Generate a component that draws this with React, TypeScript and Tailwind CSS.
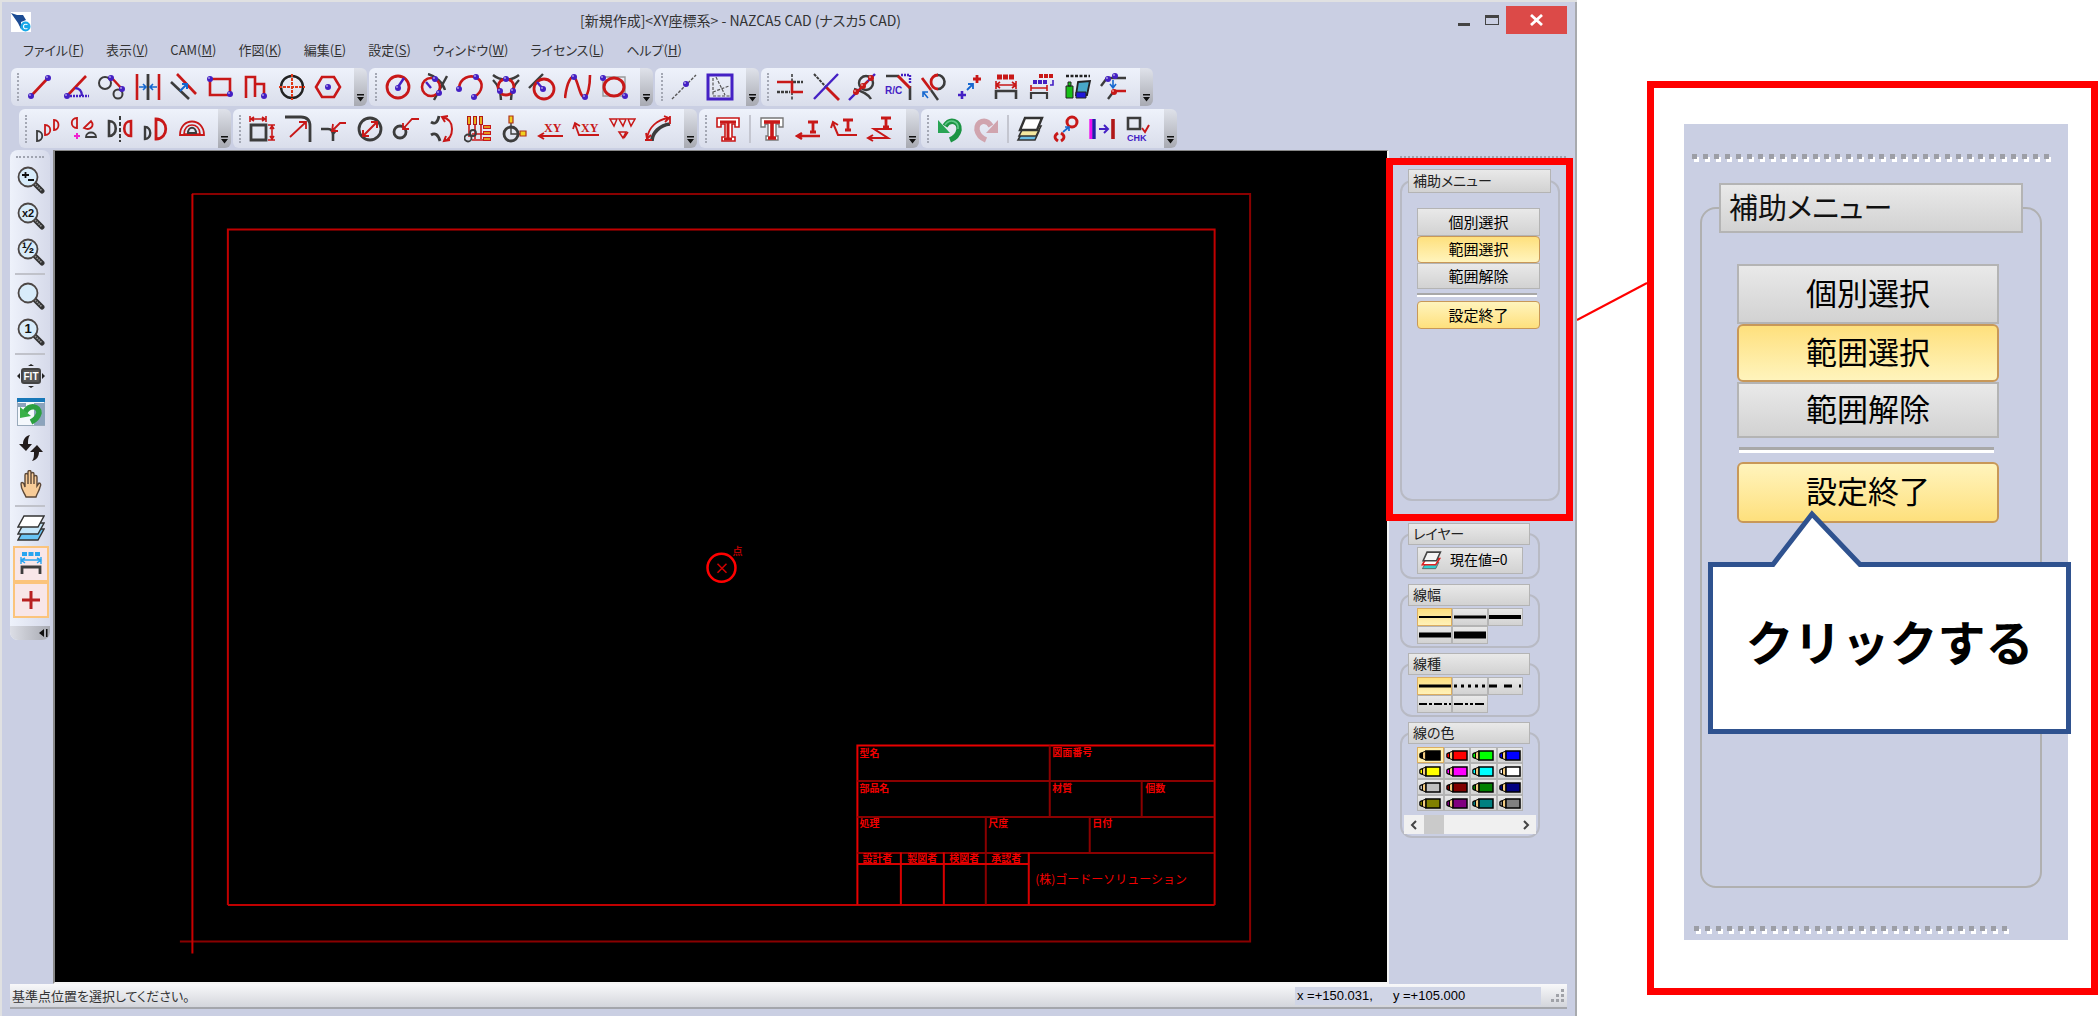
import { ReactNode } from "react";
import clsx from "clsx";

const RED = "#c81818";
const INK = "#3c3c3c";
const VIOLET = "#4420c4";
const BLUE = "#1668d0";

function Ball({ x, y, fill = VIOLET }: { x: number; y: number; fill?: string }) {
  return (
    <>
      <circle cx={x} cy={y} r="3" fill={fill} />
      <circle cx={x - 1} cy={y - 1} r="0.9" fill="#fff" opacity="0.6" />
    </>
  );
}

function Icon({ children }: { children: ReactNode }) {
  return (
    <svg width="28" height="28" viewBox="0 0 28 28" fill="none" stroke={RED} strokeWidth="2.4" aria-hidden="true">
      {children}
    </svg>
  );
}

type Tool = { name: string; icon: ReactNode; active?: boolean } | "separator";

const drawTools: Tool[] = [
  { name: "線分", icon: <><path d="M5 23 22 5" strokeWidth="2.6" /><g stroke="none"><Ball x={5} y={23} /><Ball x={22} y={5} /></g></> },
  {
    name: "角度線",
    icon: <><path d="M5 23 24 3" strokeWidth="2.6" /><path d="M5 23h22" stroke={VIOLET} strokeDasharray="2 1" /><path d="M13 15c4 0 7 3 7 8" stroke={VIOLET} /><g stroke="none"><Ball x={5} y={23} /></g></>,
  },
  {
    name: "接線",
    icon: <><circle cx="7" cy="10" r="6" stroke={INK} strokeWidth="2" /><circle cx="20" cy="21" r="4.5" stroke={INK} strokeWidth="2" /><path d="m13 4 11 12" /><g stroke="none"><Ball x={13} y={5} /><Ball x={24} y={16} /></g></>,
  },
  {
    name: "平行線",
    icon: <><path d="M3 1v26M25 1v26" strokeWidth="2.6" /><path d="M14 1v26" stroke={INK} strokeWidth="2.8" /><path d="M5 14h6m-2-3 3 3-3 3M23 14h-6m2-3-3 3 3 3" stroke={BLUE} strokeWidth="1.6" /></>,
  },
  {
    name: "オフセット",
    icon: <><path d="m1 9 18 17" stroke={INK} strokeWidth="2.6" /><path d="m7 1 19 20" strokeWidth="2.6" /><path d="m10 18 7-7m-5 0h5v5" stroke={BLUE} strokeWidth="2" /></>,
  },
  { name: "矩形", icon: <><path d="M4 6h20v16H4z" strokeWidth="2.6" /><g stroke="none"><Ball x={4} y={6} /><Ball x={24} y={21} /></g></> },
  { name: "連続線", icon: <><path d="M4 25V4h9v20M13 11h9v12" strokeWidth="2.6" /><g stroke="none"><Ball x={22} y={23} /></g></> },
  {
    name: "中心線",
    icon: <><circle cx="14" cy="14" r="11" stroke="#222" strokeWidth="2.4" /><path d="M14 1v26M1 14h26" strokeDasharray="3 1" stroke="#e03818" strokeWidth="2" /></>,
  },
  { name: "多角形", icon: <><path d="M8 4h12l6 10-6 10H8L2 14z" strokeWidth="2.6" /><g stroke="none"><Ball x={14} y={14} /></g></> },
];

const circleTools: Tool[] = [
  { name: "円", icon: <><circle cx="14" cy="14" r="11" strokeWidth="2.8" /><path d="m14 14 6-9" stroke={VIOLET} /><g stroke="none"><Ball x={14} y={15} /></g></> },
  {
    name: "接円",
    icon: <><path d="M8 1c8 2 15 9 17 16M27 3 14 27" stroke={INK} /><circle cx="11" cy="14" r="9" strokeWidth="2.6" /><path d="m6 9 5 6" stroke={VIOLET} /><g stroke="none"><Ball x={15} y={6} /><Ball x={19} y={20} /></g></>,
  },
  { name: "円弧", icon: <><path d="M3 15C4 5 14 1 21 5s6 14-3 19" strokeWidth="2.6" /><g stroke="none"><Ball x={3} y={16} /><Ball x={20} y={4} /><Ball x={18} y={24} /></g></> },
  {
    name: "三接円",
    icon: <><path d="M1 2c7 6 19 6 26 0M1 7c5 5 8 11 8 20M27 7c-5 5-8 11-8 20" stroke={INK} /><circle cx="14" cy="14" r="8" strokeWidth="2.8" /><g stroke="none"><Ball x={14} y={6} /><Ball x={8} y={18} /><Ball x={21} y={18} /></g></>,
  },
  {
    name: "接線円",
    icon: <><path d="M1 15 15 1" stroke={INK} /><circle cx="16" cy="16" r="10" strokeWidth="2.8" /><path d="m9 9 6 7" stroke={VIOLET} /><g stroke="none"><Ball x={15} y={16} /></g></>,
  },
  { name: "スプライン", icon: <><path d="M1 25C3 8 8 1 11 5s5 19 9 19 6-12 6-22" strokeWidth="2.6" /><g stroke="none"><Ball x={10} y={4} /><Ball x={21} y={24} /></g></> },
  { name: "楕円", icon: <><path d="M3 4h22v19H3z" stroke="#999" strokeWidth="1.4" /><ellipse cx="14" cy="14" rx="10" ry="9" strokeWidth="3" /><g stroke="none"><Ball x={3} y={5} /><Ball x={25} y={23} /></g></> },
];

const pointTools: Tool[] = [
  { name: "点", icon: <><path d="M2 26 26 2" stroke="#555" strokeWidth="1.4" strokeDasharray="3 1.5" /><g stroke="none"><Ball x={16} y={11} /></g></> },
  {
    name: "枠",
    icon: <><path d="M2 2h24v24H2z" stroke={VIOLET} strokeWidth="3" /><path d="M7 5v18h17M10 4l9 18M7 19l16-6" stroke="#555" strokeWidth="1.2" strokeDasharray="3 1.5" /></>,
  },
];

const editTools: Tool[] = [
  {
    name: "トリム",
    icon: <><path d="M16 1v26" stroke={INK} strokeWidth="1.6" strokeDasharray="3 1.5" /><path d="M17 9h10M1 19h13" stroke={INK} strokeWidth="2.6" strokeDasharray="3 1" /><path d="M1 9h15v10h11" strokeWidth="2.6" /></>,
  },
  {
    name: "交点分割",
    icon: <><path d="m2 1 12 13" stroke={INK} strokeDasharray="3 1" strokeWidth="2" /><path d="m14 14 13 13" strokeWidth="2.8" /><path d="M2 26 26 1" stroke={VIOLET} /></>,
  },
  {
    name: "要素分割",
    icon: <><circle cx="18" cy="10" r="7" stroke={INK} /><path d="M6 16c8 2 14 5 17 10" stroke={INK} /><path d="M1 27 27 1" stroke={VIOLET} /><path d="m8 20 12-12" /><g stroke="none"><Ball x={23} y={5} fill={RED} /><Ball x={8} y={19} fill={RED} /><Ball x={15} y={13} fill={RED} /></g></>,
  },
  {
    name: "面取り",
    icon: <><path d="M2 3h13M26 13v14" stroke={INK} strokeWidth="2.6" /><path d="M17 2h9v9" stroke={VIOLET} strokeDasharray="2 1" /><path d="m14 3 12 12" strokeWidth="3" /><text x="1" y="21" fontSize="10" fontWeight="700" fontFamily="Liberation Sans" fill={VIOLET} stroke="none">R/C</text></>,
  },
  {
    name: "延長",
    icon: <><path d="M17 2a7 7 0 0 1 1 14" stroke={INK} strokeWidth="2.6" /><path d="M18 2a7 7 0 0 0 0 14" strokeWidth="2.8" /><path d="m2 5 9 12" strokeWidth="2.8" /><path d="m11 17 7 10" stroke={INK} /><path d="m8 25-5-6m0 5v-5h5" stroke={BLUE} strokeWidth="1.6" /></>,
  },
  { name: "移動", icon: <><path d="M2 22h8M6 18v8" stroke={VIOLET} strokeWidth="2.6" /><path d="M17 6h8M21 2v8" strokeWidth="2.8" /><path d="m11 17 6-6m-5 0h5v5" stroke={BLUE} strokeWidth="1.8" /></> },
  {
    name: "寸法移動",
    icon: <><path d="M5 4h18" strokeWidth="5" strokeDasharray="5 1" /><path d="M4 8v8M24 8v8M4 12h20M8 9l-4 3 4 3M20 9l4 3-4 3" strokeWidth="1.6" /><path d="M4 26v-8h20v8" stroke={INK} strokeWidth="2.6" /></>,
  },
  {
    name: "寸法編集",
    icon: <><path d="M11 3h15" strokeWidth="4" strokeDasharray="4 1" /><path d="M5 9h15" stroke={VIOLET} strokeWidth="4" strokeDasharray="4 1" /><path d="M3 12v6M19 12v6M3 15h16" strokeWidth="1.6" /><path d="M3 26v-6h16v6" stroke={INK} strokeWidth="2.2" /><path d="M25 7v5h-3" stroke={VIOLET} strokeWidth="1.6" /></>,
  },
  {
    name: "属性変更",
    icon: <><path d="M2 3h24" stroke="#222" strokeDasharray="3 1.5" /><path d="M2 13h7v12H2zM4 9h3v4H4z" fill="#18c018" stroke="#222" strokeWidth="1" /><path d="m14 9 12-1-3 14H12z" fill="#48a8c8" stroke="#222" strokeWidth="1.8" /><path d="M12 19h10v6H12z" fill="#2018d8" stroke="#222" strokeWidth="1" /></>,
  },
  {
    name: "端点移動",
    icon: <><path d="m1 13 6-8h19" stroke={INK} /><path d="m8 26 6-8" stroke={INK} /><path d="M14 18h12" strokeWidth="2.6" /><path d="M13 7v7m-3-3 3 4 3-4" stroke={BLUE} strokeWidth="1.6" /><g stroke="none"><Ball x={8} y={6} /><Ball x={15} y={3} /><Ball x={14} y={19} fill={RED} /></g></>,
  },
];

const copyTools: Tool[] = [
  { name: "平行複写", icon: <><path d="M3 16v10c7 0 7-10 0-10z" stroke={INK} strokeWidth="1.8" /><path d="M11 10v10c7 0 7-10 0-10zM20 5v10c6 0 6-10 0-10z" strokeWidth="1.8" /></> },
  { name: "回転複写", icon: <><path d="M7 3v10C0 13 0 3 7 3zM14 13l7-7c4 5-1 10-7 7z" strokeWidth="1.8" /><path d="M16 22h10c0-6-10-6-10 0z" stroke={INK} strokeWidth="1.8" /><path d="M4 21h6M7 18v6" stroke="#f020d0" strokeWidth="2" /></> },
  { name: "対称複写", icon: <><path d="M3 6v15c9 0 9-15 0-15z" stroke={INK} strokeWidth="2.6" /><path d="M14 1v26" stroke={INK} strokeDasharray="4 2" strokeWidth="2" /><path d="M25 6v15c-9 0-9-15 0-15z" strokeWidth="2.6" /></> },
  { name: "拡大複写", icon: <><path d="M3 12v12c7 0 7-12 0-12z" stroke={INK} /><path d="M14 4v20c13 0 13-20 0-20z" strokeWidth="2.8" /></> },
  { name: "オフセット複写", icon: <><path d="M2 20C2 2 26 2 26 20z" strokeWidth="1.8" /><path d="M6 19c0-12 16-12 16 0z" strokeWidth="1.6" /><path d="M10 18c0-7 8-7 8 0z" stroke={INK} strokeWidth="2" /></> },
];

const dimensionTools: Tool[] = [
  { name: "長さ寸法", icon: <><path d="M3 10h15v15H3z" stroke={INK} strokeWidth="2.8" /><path d="M2 1v6M18 1v6M3 4h14M6 2 3 4l3 2M14 2l3 2-3 2M20 10h7M20 25h7M24 11v13M22 14l2-3 2 3M22 21l2 3 2-3" strokeWidth="1.6" /></> },
  { name: "半径寸法", icon: <><path d="M1 2h16q9 0 9 9v16" stroke={INK} strokeWidth="2.8" /><path d="M6 22 22 7m-7 0h7v7" strokeWidth="1.8" /></> },
  { name: "面取り寸法", icon: <><path d="M1 14h7q5 0 5 6v6M13 19l3-4" stroke={INK} strokeWidth="2.6" /><path d="M26 8h-6l-8 8m1-7-1 7h6" strokeWidth="1.8" /></> },
  { name: "直径寸法", icon: <><circle cx="14" cy="14" r="11" stroke={INK} strokeWidth="2.8" /><path d="M7 21 21 7m-6 0h6v6M7 15v6h6" strokeWidth="2" /></> },
  { name: "穴寸法", icon: <><circle cx="8" cy="17" r="6" stroke={INK} strokeWidth="2.8" /><path d="M27 4h-7l-9 10m0-6v6h6" strokeWidth="1.8" /></> },
  { name: "角度寸法", icon: <><path d="M3 7q6 4 8-6M3 20q6-4 9 6" stroke={INK} strokeWidth="2.8" /><path d="M14 2q10 2 10 12t-8 12M20 1l-6 1 3 5M22 25l-6 1 2-5" strokeWidth="2" /></> },
  {
    name: "座標寸法",
    icon: <><path d="M5 1v9M11 1v9M17 1v9" stroke="#b01818" strokeWidth="4" /><path d="M5 2v7M11 2v7M17 2v7" stroke="#f0c020" strokeWidth="1.8" /><path d="M5 10v12M11 10v14M17 10v14M8 19h12M8 25h12" strokeWidth="1.6" /><path d="M19 12h8M19 18h8M19 24h8" strokeWidth="4" /><path d="M20 12h6M20 18h6M20 24h6" stroke="#f0c020" strokeWidth="1.6" /><circle cx="4" cy="23" r="3.5" stroke={INK} strokeWidth="1.8" /><circle cx="9" cy="18" r="3" stroke={INK} strokeWidth="1.8" /></>,
  },
  {
    name: "穴座標",
    icon: <><circle cx="11" cy="19" r="7" stroke={INK} strokeWidth="2.8" /><path d="M11 8v11h10" stroke={INK} strokeWidth="1.4" /><path d="M9 1h4v7H9zM20 16h6v5h-6z" fill="#f0d020" stroke="#b03018" strokeWidth="1.2" /></>,
  },
  { name: "XY座標", icon: <><path d="M27 21H3m5-3-5 3 5 3" strokeWidth="2" /><text x="8" y="17" fontSize="12" fontWeight="700" fontFamily="Liberation Serif" fill={RED} stroke="none">XY</text></> },
  { name: "XY引出", icon: <><path d="M27 20H7L3 9m-2 5 2-6 5 3" strokeWidth="1.8" /><text x="9" y="17" fontSize="12" fontWeight="700" fontFamily="Liberation Serif" fill={RED} stroke="none">XY</text></> },
  { name: "仕上記号", icon: <path d="M2 4h7L6 11zM11 4h7l-3 7zM20 4h7l-4 7zM11 17h7l-3 6zM16 23l4-6" strokeWidth="1.5" /> },
  { name: "円弧寸法", icon: <><path d="M8 26c0-8 8-16 18-17" stroke={INK} strokeWidth="3.6" /><path d="M3 23C5 12 13 5 24 3M20 1l5 2-4 4M2 18l1 6 4-4M26 1v8M1 25h7" strokeWidth="1.8" /></> },
];

const textTools: Tool[] = [
  { name: "文字枠", icon: <><path d="M3 3h22v9h-4V9h-3v13h3v4H8v-4h3V9H7v3H3z" fill="#fff" strokeWidth="1.6" /><path d="M6 7h16M14 8v16M10 24h8" strokeWidth="3" /></> },
  "separator",
  { name: "文字", icon: <><path d="M3 3h22v9h-4V9h-3v12h2v4H8v-4h2V9H7v3H3z" fill="#fff" stroke="#777" strokeWidth="1.4" /><path d="M6 7h16M14 7v17M10 23h8" strokeWidth="3.6" /></> },
  { name: "引出文字", icon: <><path d="M26 21H3m5-3-5 3 5 3" /><path d="M14 7h10M19 7v10M16 17h6" strokeWidth="2.8" /></> },
  { name: "引出線", icon: <><path d="M27 20H8L3 8m-2 5 2-6 5 3" strokeWidth="2" /><path d="M13 5h10M18 5v10M15 15h6" strokeWidth="2.8" /></> },
  { name: "矢印文字", icon: <><path d="M15 3h10M20 3v9M17 12h6" strokeWidth="2.8" /><path d="M26 14H8l14 9H2m5-3-5 3 5 3" strokeWidth="2" /></> },
];

const undoTools: Tool[] = [
  {
    name: "元に戻す",
    icon: <><path d="M9 11c5-8 15-5 14 4-1 5-4 8-9 10" stroke="#1c9444" strokeWidth="5.5" /><path d="M9 10c5-7 14-4 13 4" stroke="#60c888" strokeWidth="1.6" /><path d="M2 5v13h12z" fill="#28a454" stroke="none" /></>,
  },
  {
    name: "やり直し",
    icon: <><path d="M19 11C14 3 4 6 5 15c1 5 4 8 9 10" stroke="#d0a4ae" strokeWidth="5.5" /><path d="M26 5v13H14z" fill="#d0a4ae" stroke="none" /></>,
  },
  "separator",
  {
    name: "レイヤー",
    icon: <><path d="M7 16h16l-4 9H2z" fill="#68bce4" stroke="#333" strokeWidth="1.6" /><path d="M8 11h17l-5 10H3z" fill="#f4e8a0" stroke="#333" strokeWidth="1.6" /><path d="M9 3h17l-5 12H4z" fill="#fff" stroke="#333" strokeWidth="2.4" /></>,
  },
  { name: "要素変換", icon: <><circle cx="20" cy="7" r="5" strokeWidth="3" /><path d="M6 18q-6 4 0 8M9 18q6 4 0 8" strokeWidth="2.8" /><path d="m11 17 6-5m-4 0h4v4" stroke={BLUE} strokeWidth="1.7" /></> },
  { name: "間隔", icon: <><path d="M3 4v20" stroke="#f010f0" strokeWidth="3.4" /><path d="M6 4v20" stroke="#2020a8" strokeWidth="3.4" /><path d="M25 4v20" strokeWidth="3.6" stroke="#b01818" /><path d="M11 14h8m-3-4 4 4-4 4" stroke={VIOLET} strokeWidth="2" /></> },
  {
    name: "チェック",
    icon: <><path d="M4 3h12v11H4z" stroke={INK} strokeWidth="2.6" /><path d="m18 13 3 4 4-7" strokeWidth="2" /><text x="3" y="26" fontSize="9" fontWeight="700" fontFamily="Liberation Sans" fill={VIOLET} stroke="none">CHK</text></>,
  },
];

const Lens = ({ label, labelSize = 11 }: { label?: string; labelSize?: number }) => (
  <>
    <path d="m17 17 8 8" stroke="#333" strokeWidth="5" strokeLinecap="round" />
    <path d="m18 18 7 7" stroke="#999" strokeWidth="1.6" strokeDasharray="1.5 1" />
    <circle cx="11" cy="11" r="9.5" fill="#d8ecfa" stroke="#4c4644" strokeWidth="1.8" />
    {label && (
      <text x="11" y="15" textAnchor="middle" fontSize={labelSize} fontWeight="700" fontFamily="Liberation Sans" fill="#111" stroke="none">
        {label}
      </text>
    )}
  </>
);

const viewTools: Tool[] = [
  { name: "拡大縮小", icon: <><Lens /><path d="M5 9h7M8.5 6v6M11 14h6" stroke="#111" strokeWidth="1.8" /></> },
  { name: "2倍", icon: <Lens label="x2" /> },
  { name: "1/2倍", icon: <Lens label="½" labelSize={15} /> },
  "separator",
  { name: "窓拡大", icon: <Lens /> },
  { name: "等倍", icon: <Lens label="1" labelSize={13} /> },
  "separator",
  {
    name: "全体表示",
    icon: <><rect x="5" y="7" width="18" height="14" rx="2" fill="#555" stroke="#444" strokeWidth="2" /><text x="14" y="18" textAnchor="middle" fontSize="10" fontWeight="700" fontFamily="Liberation Sans" fill="#fff" stroke="none">FIT</text><path d="m0 14 3-3v6zM28 14l-3-3v6zM11 4l3-2 3 2zM11 24l3 2 3-2z" fill="#222" stroke="none" /></>,
  },
  {
    name: "再表示",
    icon: <><path d="M0 0h28v28H0z" fill="#f4f8fc" stroke="#9ab" strokeWidth="2" /><path d="M0 0h28v4H0z" fill="#1878b8" stroke="none" /><path d="M17 5h11v22H17zM1 5h8v4H1z" fill="#8ca4bc" stroke="none" /><path d="M8 14c5-8 14-6 14 1-1 4-4 7-8 9" stroke="#2ca040" strokeWidth="5.5" /><path d="M3 9v11l11-2z" fill="#38b048" stroke="none" /></>,
  },
  { name: "更新", icon: <path d="M13 1C8 2 6 6 6 10H2l7 7 6-7h-4c0-4 0-6 2-9zM15 27c5-1 7-5 7-9h4l-6-7-7 7h4c0 4 0 6-2 9z" fill="#221c1c" stroke="none" /> },
  {
    name: "画面移動",
    icon: <path d="M9 27c-2-5-5-7-5-13 0-2 2-2 3 0l1 3V5c0-2 3-2 3 0V2c0-2 3-2 3 0v2c0-2 3-2 3 0v3c0-2 3-2 3 0v9l2-3c2 0 2 2 1 4-1 5-3 6-4 10zM11 5v9M14 4v10M17 6v8" fill="#f8cc98" stroke="#5c4838" strokeWidth="1.4" />,
  },
  "separator",
  {
    name: "レイヤー一覧",
    icon: <><path d="M7 15h20l-6 11H1z" fill="#68c4f4" stroke="#333" strokeWidth="1.4" /><path d="M7 9h20l-6 11H1z" fill="#c4e6fa" stroke="#333" strokeWidth="1.4" /><path d="M7 2h20l-6 11H1z" fill="#fff" stroke="#333" strokeWidth="1.4" /></>,
  },
  {
    name: "寸法表示",
    active: true,
    icon: <><path d="M5 4h18" stroke="#28a4f0" strokeWidth="4" strokeDasharray="5 1.5" /><path d="M4 7v7M24 7v7M4 10h20M8 8l-4 2 4 3M20 8l4 2-4 3" stroke="#28a4f0" strokeWidth="1.4" /><path d="M5 24v-7h18v7" stroke={INK} strokeWidth="2.8" /></>,
  },
  { name: "原点表示", active: true, icon: <path d="M5 14h18M14 5v18" stroke="#b82020" strokeWidth="3" /> },
];

const menus = [
  ["ファイル", "F"],
  ["表示", "V"],
  ["CAM", "M"],
  ["作図", "K"],
  ["編集", "E"],
  ["設定", "S"],
  ["ウィンドウ", "W"],
  ["ライセンス", "L"],
  ["ヘルプ", "H"],
];

const pens = [
  "#000000", "#ff0000", "#00ff00", "#0000ff",
  "#ffff00", "#ff00ff", "#00ffff", "#ffffff",
  "#c0c0c0", "#800000", "#008000", "#000080",
  "#808000", "#800080", "#008080", "#808080",
];

const greyFace = "border-[#b4b4b4] bg-linear-to-b from-[#e9e9e9] to-[#d2d2d2]";

function Toolbar({ label, tools }: { label: string; tools: Tool[] }) {
  return (
    <div role="toolbar" aria-label={label} className="flex overflow-hidden rounded-md">
      <div className="flex items-center bg-linear-to-b from-[#eef2fb] to-[#dadeeb] pr-2">
        <div className="ml-[6px] mr-[3px] h-7 border-l-2 border-dotted border-[#a4a8b4]" />
        {tools.map((tool, i) =>
          tool === "separator" ? (
            <div key={i} className="mx-[3px] h-7 w-[2px] bg-[#c4c6d0]" />
          ) : (
            <button key={i} title={tool.name} className="flex w-9 justify-center">
              <Icon>{tool.icon}</Icon>
            </button>
          )
        )}
      </div>
      <button title="オプション" className="flex w-[13px] items-end justify-center bg-linear-to-b from-[#dfe2ea] to-[#a8aab2] pb-1">
        <svg width="9" height="9" viewBox="0 0 9 9" aria-hidden="true">
          <path d="M1 1h7v1.5H1zM1 4h7L4.500 8.5z" fill="#111" />
        </svg>
      </button>
    </div>
  );
}

function ViewBar() {
  return (
    <div role="toolbar" aria-label="表示" className="w-10 overflow-hidden rounded-lg bg-linear-to-r from-[#eef2fb] to-[#d6daea]">
      <div className="mx-auto mb-1 mt-[6px] w-7 border-t-2 border-dotted border-[#a0a4b0]" />
      {viewTools.map((tool, i) =>
        tool === "separator" ? (
          <div key={i} className="mx-auto my-[3px] h-[2px] w-[30px] bg-[#c0c2ca]" />
        ) : (
          <button
            key={i}
            title={tool.name}
            className={clsx("ml-[3px] flex h-9 w-9 items-center justify-center", tool.active && "border-2 border-[#fbc47c] bg-[#f8e6e8]")}
          >
            <Icon>{tool.icon}</Icon>
          </button>
        )
      )}
      <button title="オプション" className="mt-2 flex h-[14px] w-full items-center justify-end bg-linear-to-r from-[#dcdee6] to-[#a8aab2] pr-[2px]">
        <svg width="9" height="8" viewBox="0 0 9 8" aria-hidden="true">
          <path d="M5 0v8L0 4zM7 0h1.5v8H7z" fill="#111" />
        </svg>
      </button>
    </div>
  );
}

function Sheet() {
  return (
    <svg viewBox="0 0 1333 830" className="block w-full" fill="none" stroke="#8a0000" strokeWidth="2" role="img" aria-label="図面">
      <path d="M125 791H1196V43H137" />
      <path d="M137.500 43V803" stroke="#c80000" />
      <path d="M173 754.500V78.500H1160.500V754.500" stroke="#c00000" />
      <path d="M173 754.500H1160.500" stroke="#c00000" />
      <path d="M803 754V595H1160" stroke="#e80000" />
      <path d="M803 630.500h357M803 666.500h357M803 702.500h357M995.500 595v72M1087.500 630v36M931.500 666v88M1035.500 666v36" />
      <path d="M803 713.500h172M846.500 702v52M889.500 702v52M974.500 702v52" stroke="#d80000" />
      <circle cx="667" cy="417" r="14" stroke="#ff0000" strokeWidth="2.500" />
      <path d="m663 413 9 9m0-9-9 9" stroke="#d00000" strokeWidth="1.500" />
      <g fill="#f00000" stroke="none" fontSize="10" fontWeight="700" fontFamily="'Noto Sans CJK JP', sans-serif">
        <text x="678" y="404" fill="#b00000">点</text>
        <text x="805" y="606">型名</text>
        <text x="998" y="605">図面番号</text>
        <text x="805" y="641">部品名</text>
        <text x="998" y="641">材質</text>
        <text x="1091" y="641">個数</text>
        <text x="805" y="677">処理</text>
        <text x="934" y="677">尺度</text>
        <text x="1038" y="677">日付</text>
        <text x="808" y="712">設計者</text>
        <text x="853" y="712">製図者</text>
        <text x="895" y="712">検図者</text>
        <text x="937" y="712">承認者</text>
        <text x="981" y="734" fontSize="12" fontWeight="400" className="[font-feature-settings:normal]">
          (株)ゴードーソリューション
        </text>
      </g>
    </svg>
  );
}

function Group({ title, wide, children }: { title: string; wide?: boolean; children: ReactNode }) {
  return (
    <fieldset className={clsx("rounded-xl border-2 border-[#b8bac4]", wide ? "h-[332px] w-[160px]" : "w-[140px]")}>
      <legend className={clsx("ml-[6px] border pl-1 text-[14px] text-[#222]", greyFace, wide ? "h-6 w-[143px] leading-5" : "h-[22px] w-[122px] leading-[18px]")}>
        {title}
      </legend>
      {children}
    </fieldset>
  );
}

function LineCell({ active, width = 2, dash }: { active?: boolean; width?: number; dash?: string }) {
  return (
    <button
      title={`線 ${width}`}
      className={clsx("flex h-[18px] items-center justify-center border", active ? "border-[#dcae60] bg-linear-to-b from-[#fee080] to-[#fff2b8]" : greyFace)}
    >
      <svg width="32" height="8" viewBox="0 0 32 8" aria-hidden="true">
        <path d="M0 4h32" stroke="#000" strokeWidth={width} strokeDasharray={dash} />
      </svg>
    </button>
  );
}

function PropertyPanel() {
  return (
    <div className="flex flex-col gap-[5px] pl-[11px] pt-[2px]">
      <Group title="レイヤー">
        <button className={clsx("mx-[15px] mb-[3px] mt-[2px] flex h-[27px] w-[106px] items-center gap-2 border pb-[2px] text-[14px] text-black", greyFace)}>
          <svg width="22" height="22" viewBox="0 0 28 28" className="ml-[2px]" aria-hidden="true">
            <path d="M8 17h16l-4 8H3z" fill="#30d0d0" stroke="#555" />
            <path d="M8 12h17l-5 8H3z" fill="#fff" stroke="#e02020" strokeWidth="2" />
            <path d="M9 4h17l-5 11H4z" fill="#f4f4f4" stroke="#444" strokeWidth="2" />
          </svg>
          現在値=0
        </button>
      </Group>
      <Group title="線幅">
        <div className="mx-[15px] mb-[2px] mt-[2px] grid grid-cols-3">
          <LineCell active width={2} />
          <LineCell width={3} />
          <LineCell width={4} />
          <LineCell width={5} />
          <LineCell width={7} />
        </div>
      </Group>
      <Group title="線種">
        <div className="mx-[15px] mb-[2px] mt-[2px] grid grid-cols-3">
          <LineCell active width={3} />
          <LineCell width={3} dash="3 4" />
          <LineCell width={3} dash="8 7" />
          <LineCell width={2} dash="8 2 3 2" />
          <LineCell width={2} dash="9 2 3 2 3 2" />
        </div>
      </Group>
      <Group title="線の色">
        <div className="mx-[15px] mt-[3px] grid grid-cols-4">
          {pens.map((pen, i) => (
            <button
              key={pen}
              title={pen}
              className={clsx("flex h-4 items-center justify-center border", i === 0 ? "border-[#dcae60] bg-[#fff0b0]" : greyFace)}
            >
              <svg width="22" height="11" viewBox="0 0 22 11" stroke="#000" aria-hidden="true">
                <path d="M7 1 1 3.500v4L7 10z" fill="#f4cc80" />
                <path d="M1 3.500 3.500 3v5L1 7.500z" fill={pen} />
                <path d="M7 1h14v9H7z" fill={pen} strokeWidth="1.500" />
              </svg>
            </button>
          ))}
        </div>
        <div className="mx-[2px] mb-[2px] mt-1 flex h-[19px] items-center bg-[#f0f0f0] text-[#444]">
          <button title="左" className="flex w-5 justify-center">
            <svg width="8" height="10" viewBox="0 0 8 10" fill="none" stroke="currentColor" strokeWidth="2"><path d="M6 1 2 5l4 4" /></svg>
          </button>
          <div className="h-full w-5 bg-[#cacaca]" />
          <button title="右" className="ml-auto flex w-5 justify-center">
            <svg width="8" height="10" viewBox="0 0 8 10" fill="none" stroke="currentColor" strokeWidth="2"><path d="m2 1 4 4-4 4" /></svg>
          </button>
        </div>
      </Group>
    </div>
  );
}

function AssistMenu() {
  const base = "block w-full border pb-[2px] text-[15px] leading-none text-black";
  return (
    <section className="relative h-[371px] pl-[11px] pt-[6px]">
      <div className="w-[166px] border-t-2 border-dotted border-[#a0a2ac]" />
      <div className="pt-[11px]">
        <Group title="補助メニュー" wide>
          <div className="ml-[15px] mt-[15px] w-[123px]">
            <button className={clsx(base, greyFace, "h-7")}>個別選択</button>
            <button className={clsx(base, "h-[27px] rounded-sm border-[#c89858] bg-linear-to-b from-[#fee07c] to-[#fff4bc]")}>範囲選択</button>
            <button className={clsx(base, greyFace, "h-[26px]")}>範囲解除</button>
            <hr className="my-1 mr-[3px] border-b-2 border-t-2 border-b-white border-t-[#a8a8a8]" />
            <button className={clsx(base, "h-7 rounded-sm border-[#c89858] bg-linear-to-b from-[#fff4bc] to-[#fee07c]")}>設定終了</button>
          </div>
        </Group>
      </div>
      <div className="pointer-events-none absolute -left-[3px] bottom-0 right-[2px] top-2 border-[7px] border-[#ff0000]" />
    </section>
  );
}

function CadWindow() {
  return (
    <div className="flex min-w-0 flex-1 flex-col border-l-2 border-t-2 border-[#e0e1e2]">
      <div className="flex flex-1 flex-col border-r-2 border-r-[#a8aaae] bg-[#cacfe3] pb-[7px] text-[#333]">
        <header className="flex h-9 items-start pl-[9px] pr-[8px]">
          <svg width="20" height="20" viewBox="0 0 20 20" className="mt-[10px]" aria-hidden="true">
            <path d="M0 0h20v20H0z" fill="#fff" />
            <path d="M0 1 6 3l6 0 3 5-5 2 0 7-3-6z" fill="#1c4c94" />
            <circle cx="14.500" cy="14.500" r="5" fill="#18a8e8" />
            <path d="M16.500 12.500q-4-1-4 2t4 2" stroke="#fff" strokeWidth="1.200" fill="none" />
          </svg>
          <h1 className="flex-1 text-center text-[14px] leading-9">[新規作成]&lt;XY座標系&gt; - NAZCA5 CAD (ナスカ5 CAD)</h1>
          <button title="最小化" className="flex h-9 w-7 items-center justify-center">
            <span className="mt-2 h-[3px] w-3 bg-[#444]" />
          </button>
          <button title="最大化" className="flex h-9 w-7 items-center justify-center">
            <span className="h-[10px] w-[14px] border border-t-[3px] border-[#444]" />
          </button>
          <button title="閉じる" className="mt-1 flex h-7 w-[61px] items-center justify-center bg-[#dc4a48]">
            <svg width="13" height="12" viewBox="0 0 13 12" stroke="#fff" strokeWidth="2.800" aria-hidden="true">
              <path d="m1 1 11 10M12 1 1 11" />
            </svg>
          </button>
        </header>
        <nav className="flex h-7 items-center gap-[22px] pb-1 pl-[21px] text-[13px]">
          {menus.map(([name, key]) => (
            <button key={key} className="whitespace-nowrap">
              {name}(<u>{key}</u>)
            </button>
          ))}
        </nav>
        <div className="mt-[2px] flex h-[38px] gap-[2px] pl-[9px]">
          <Toolbar label="作図" tools={drawTools} />
          <Toolbar label="円" tools={circleTools} />
          <Toolbar label="点" tools={pointTools} />
          <Toolbar label="編集" tools={editTools} />
        </div>
        <div className="mt-[3px] flex h-[39px] gap-[2px] pl-[17px]">
          <Toolbar label="複写" tools={copyTools} />
          <Toolbar label="寸法" tools={dimensionTools} />
          <Toolbar label="文字" tools={textTools} />
          <Toolbar label="操作" tools={undoTools} />
        </div>
        <div className="mt-[2px] flex flex-1 items-stretch">
          <div className="pl-2 pr-[3px]">
            <ViewBar />
          </div>
          <main className="flex-1 border-b-2 border-l-2 border-r-2 border-t border-b-[#f4f4f4] border-l-[#888] border-r-[#f4f4f4] border-t-[#888] bg-black">
            <Sheet />
          </main>
          <aside className="w-[186px] shrink-0">
            <AssistMenu />
            <PropertyPanel />
          </aside>
        </div>
        <footer className="ml-2 mr-2 flex h-[25px] items-center border-b-2 border-[#a4a6ac] bg-linear-to-b from-[#f8f8fa] to-[#d4d6dc] text-[13px]">
          <p className="flex-1 pl-[2px]">基準点位置を選択してください。</p>
          <output className="flex h-[18px] w-[246px] items-center gap-5 bg-[#d0d5e6] pl-[2px] font-['Liberation_Sans'] text-[13px] text-black">
            <span>x =+150.031,</span>
            <span>y =+105.000</span>
          </output>
          <svg width="16" height="16" viewBox="0 0 16 16" className="ml-2 mr-[2px]" fill="#a0a2a8" aria-hidden="true">
            <path d="M12 1h3v3h-3zM7 6h3v3H7zM12 6h3v3h-3zM2 11h3v3H2zM7 11h3v3H7zM12 11h3v3h-3z" />
          </svg>
        </footer>
      </div>
    </div>
  );
}

function ZoomedDots({ className }: { className: string }) {
  return (
    <div
      className={clsx(
        "h-[5px] bg-[repeating-linear-gradient(90deg,#9c9ea6_0_5px,transparent_5px_11px)] drop-shadow-[2px_3px_0_white]",
        className
      )}
    />
  );
}

function ZoomedMenu() {
  const base = "block w-full border-2 pb-[6px] text-[31px] leading-none text-black";
  return (
    <aside className="mb-[21px] mt-[81px] w-[451px] shrink-0 border-[7px] border-[#ff0000] px-[30px] pb-12 pt-9">
      <div className="relative h-[816px] w-[384px] bg-[#cacfe3] pl-4 pt-[30px]">
        <ZoomedDots className="-ml-2 w-[357px]" />
        <fieldset className="mt-6 h-[705px] w-[342px] rounded-2xl border-2 border-[#b0b0b0]">
          <legend className={clsx("ml-[17px] h-[50px] w-[304px] border-2 pl-2 text-[29px] leading-[42px] text-[#111]", greyFace)}>
            補助メニュー
          </legend>
          <div className="ml-[35px] mt-[31px] w-[262px]">
            <button className={clsx(base, greyFace, "h-[60px]")}>個別選択</button>
            <button className={clsx(base, "h-[58px] rounded-md border-[#c89858] bg-linear-to-b from-[#fee07c] to-[#fff4bc]")}>範囲選択</button>
            <button className={clsx(base, greyFace, "h-14")}>範囲解除</button>
            <hr className="my-[9px] ml-[2px] mr-[5px] border-b-[3px] border-t-[3px] border-b-white border-t-[#a8a8a8]" />
            <button className={clsx(base, "h-[61px] rounded-md border-[#c89858] bg-linear-to-b from-[#fff4bc] to-[#fee07c]")}>設定終了</button>
          </div>
        </fieldset>
        <ZoomedDots className="-ml-[6px] mt-[38px] w-[317px]" />
        <div className="absolute left-6 top-[438px] flex h-[172px] w-[363px] items-center justify-center border-[5px] border-[#2f528f] bg-white pb-4">
          <svg width="96" height="59" viewBox="0 0 96 59" className="absolute -top-[59px] left-[55px]" aria-hidden="true">
            <path d="M3 59 44 6 92 59z" fill="#fff" />
            <path d="M0 56.500H5L44 6 92 56.500H96" fill="none" stroke="#2f528f" strokeWidth="5" />
          </svg>
          <p className="whitespace-nowrap text-[48px] font-bold leading-none text-black [font-feature-settings:normal]">クリックする</p>
        </div>
      </div>
    </aside>
  );
}

export default function App() {
  return (
    <div className="flex min-h-screen bg-white font-['Noto_Sans_CJK_JP',sans-serif] [font-feature-settings:'palt']">
      <CadWindow />
      <svg width="70" height="40" viewBox="0 0 70 40" className="mt-[281px] shrink-0" aria-hidden="true">
        <path d="M0 39 70 2" stroke="#ff0000" strokeWidth="2" />
      </svg>
      <ZoomedMenu />
    </div>
  );
}
